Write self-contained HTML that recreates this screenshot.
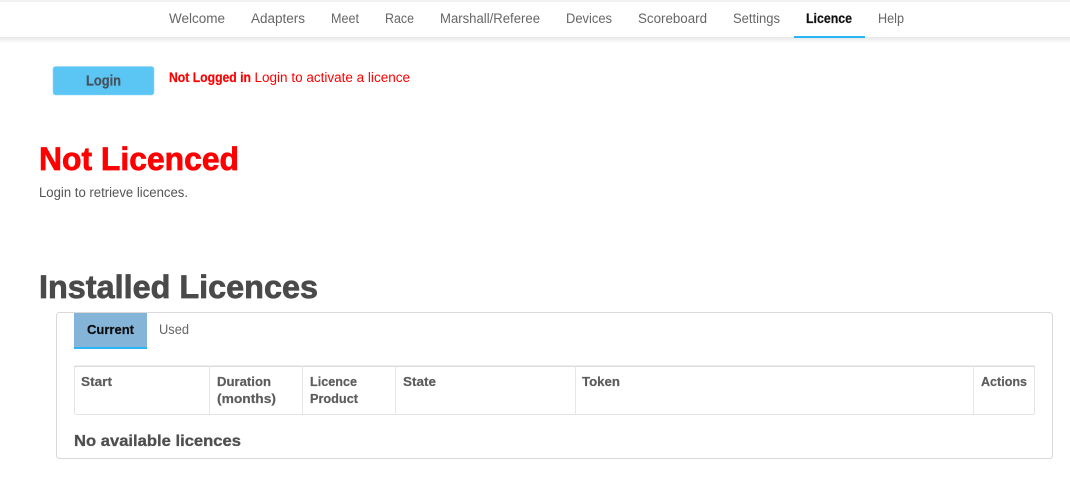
<!DOCTYPE html>
<html><head><meta charset="utf-8"><title>Licence</title>
<style>
html,body{margin:0;padding:0;background:#fff;width:1070px;height:490px;overflow:hidden}
svg{display:block;position:absolute;left:0;top:0;filter:blur(0.25px)}
text{font-family:"Liberation Sans",sans-serif}
.n{font-size:13.4px;fill:#666}
.b{font-weight:700}
.th{font-size:13px;font-weight:700;fill:#5c5c5c;stroke:#5c5c5c;stroke-width:.2px}
</style></head><body>
<svg width="1070" height="490" viewBox="0 0 1070 490" xmlns="http://www.w3.org/2000/svg">
<defs><linearGradient id="s" x1="0" y1="0" x2="0" y2="1"><stop offset="0" stop-color="#e6e6e6"/><stop offset="1" stop-color="#fff"/></linearGradient></defs>
<rect x="0" y="0" width="1070" height="2" fill="#f1f1f1"/>
<rect x="0" y="37" width="1070" height="6" fill="url(#s)"/>
<g class="n">
<text x="169" y="23" class="n" textLength="56" lengthAdjust="spacingAndGlyphs">Welcome</text>
<text x="251" y="23" class="n" textLength="54" lengthAdjust="spacingAndGlyphs">Adapters</text>
<text x="331" y="23" class="n" textLength="28" lengthAdjust="spacingAndGlyphs">Meet</text>
<text x="385" y="23" class="n" textLength="29" lengthAdjust="spacingAndGlyphs">Race</text>
<text x="440" y="23" class="n" textLength="100" lengthAdjust="spacingAndGlyphs">Marshall/Referee</text>
<text x="566" y="23" class="n" textLength="46" lengthAdjust="spacingAndGlyphs">Devices</text>
<text x="638" y="23" class="n" textLength="69" lengthAdjust="spacingAndGlyphs">Scoreboard</text>
<text x="733" y="23" class="n" textLength="47" lengthAdjust="spacingAndGlyphs">Settings</text>
<text x="806" y="23" class="b" font-size="13.4" fill="#111" stroke="#111" stroke-width=".2" textLength="46" lengthAdjust="spacingAndGlyphs">Licence</text>
<text x="878" y="23" class="n" textLength="26" lengthAdjust="spacingAndGlyphs">Help</text>
</g>
<rect x="794" y="36" width="71" height="2" fill="#29b6f6"/>

<rect x="53" y="66.5" width="101" height="28.5" rx="2.5" fill="#5bc6f3" stroke="#8fd8f7" stroke-width=".6"/>
<text x="86" y="85.5" font-size="14.5" font-weight="700" fill="#46525c" stroke="#46525c" stroke-width=".2" textLength="35" lengthAdjust="spacingAndGlyphs">Login</text>
<text x="169" y="82" font-size="13.4" font-weight="700" fill="#ff0000" stroke="#ff0000" stroke-width=".2" textLength="82" lengthAdjust="spacingAndGlyphs">Not Logged in</text>
<text x="254.5" y="82" font-size="13.4" fill="#ff0000" textLength="155.5" lengthAdjust="spacingAndGlyphs">Login to activate a licence</text>

<text x="39" y="170" font-size="32" font-weight="700" fill="#ff0000" stroke="#ff0000" stroke-width=".7" textLength="200" lengthAdjust="spacingAndGlyphs">Not Licenced</text>
<text x="39" y="197" font-size="13.4" fill="#555" textLength="149" lengthAdjust="spacingAndGlyphs">Login to retrieve licences.</text>
<text x="39" y="298" font-size="32" font-weight="700" fill="#4a4a4a" stroke="#4a4a4a" stroke-width=".7" textLength="279" lengthAdjust="spacingAndGlyphs">Installed Licences</text>

<rect x="56.5" y="312.5" width="996" height="146" rx="3" fill="#fff" stroke="#d9d9d9"/>
<rect x="74" y="313" width="73" height="35" fill="#84b4d8"/>
<rect x="74" y="347" width="73" height="2" fill="#29b6f6"/>
<text x="87" y="334" font-size="13" font-weight="700" fill="#0c0c0c" stroke="#0c0c0c" stroke-width=".2" textLength="47" lengthAdjust="spacingAndGlyphs">Current</text>
<text x="159" y="334" font-size="13.4" fill="#666" textLength="30" lengthAdjust="spacingAndGlyphs">Used</text>

<rect x="74.5" y="366.5" width="960" height="48" rx="2" fill="#fff" stroke="#e4e4e4"/>
<rect x="74" y="365.5" width="961" height="1.5" fill="#dcdcdc"/>
<g fill="#e6e6e6">
<rect x="209" y="366" width="1" height="49"/>
<rect x="302" y="366" width="1" height="49"/>
<rect x="395" y="366" width="1" height="49"/>
<rect x="575" y="366" width="1" height="49"/>
<rect x="973" y="366" width="1" height="49"/>
</g>
<text x="81" y="386" class="th" textLength="31" lengthAdjust="spacingAndGlyphs">Start</text>
<text x="217" y="386" class="th" textLength="54" lengthAdjust="spacingAndGlyphs">Duration</text>
<text x="217" y="403" class="th" textLength="59" lengthAdjust="spacingAndGlyphs">(months)</text>
<text x="310" y="386" class="th" textLength="47" lengthAdjust="spacingAndGlyphs">Licence</text>
<text x="310" y="403" class="th" textLength="48" lengthAdjust="spacingAndGlyphs">Product</text>
<text x="403" y="386" class="th" textLength="33" lengthAdjust="spacingAndGlyphs">State</text>
<text x="582" y="386" class="th" textLength="38" lengthAdjust="spacingAndGlyphs">Token</text>
<text x="981" y="386" class="th" textLength="46" lengthAdjust="spacingAndGlyphs">Actions</text>
<text x="74" y="446" font-size="16" font-weight="700" fill="#4f4f4f" stroke="#4f4f4f" stroke-width=".3" textLength="167" lengthAdjust="spacingAndGlyphs">No available licences</text>
</svg>
</body></html>
